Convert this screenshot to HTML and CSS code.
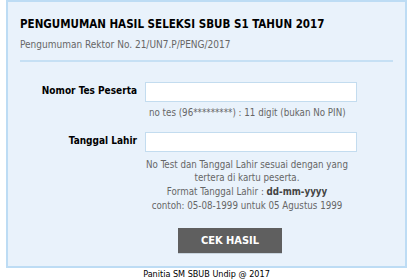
FILE: index.html
```html
<!DOCTYPE html>
<html lang="id">
<head>
    <meta charset="UTF-8">
    <title>Pengumuman Hasil Seleksi SBUB S1</title>
    <link rel="stylesheet" href="styles.css">
</head>
<body>
    <div class="panel">
        <!-- Header -->
        <div class="panel-header">
            <h1>PENGUMUMAN HASIL SELEKSI SBUB S1 TAHUN 2017</h1>
            <p class="subtitle">Pengumuman Rektor No. 21/UN7.P/PENG/2017</p>
        </div>

        <!-- Form -->
        <form class="form" onsubmit="return false">
            <div class="form-row">
                <label for="notes">Nomor Tes Peserta</label>
                <div class="field">
                    <input type="text" id="notes" class="input">
                    <p class="hint">no tes (96*********) : 11 digit (bukan No PIN)</p>
                </div>
            </div>
            <div class="form-row">
                <label for="tgl">Tanggal Lahir</label>
                <div class="field">
                    <input type="text" id="tgl" class="input">
                    <p class="hint hint-center">No Test dan Tanggal Lahir sesuai dengan yang<br>
                        tertera di kartu peserta.<br>
                        Format Tanggal Lahir : <b>dd-mm-yyyy</b><br>
                        contoh: 05-08-1999 untuk 05 Agustus 1999</p>
                </div>
            </div>
            <div class="form-row last">
                <span class="label-space"></span>
                <div class="field">
                    <button type="submit" class="btn-cek">CEK HASIL</button>
                </div>
            </div>
        </form>
    </div>

    <div class="footer">Panitia SM SBUB Undip @ 2017</div>
</body>
</html>
```

FILE: styles.css
```css
/* Global */
body {
    margin: 0;
    font-family: 'DejaVu Sans Condensed', 'DejaVu Sans', sans-serif;
    background: #fff;
    color: #000;
}

/* Panel */
.panel {
    width: 401px;
    box-sizing: border-box;
    margin-left: 6px;
    border: 2px solid #bddcf4;
    background: #e9f2fb;
    padding: 0 12px 12px;
}

.panel-header {
    padding-top: 13px;
    border-bottom: 2px solid #c6e0f4;
    padding-bottom: 8px;
}

.panel-header h1 {
    margin: 0;
    font-size: 11.5px;
    line-height: 18px;
    font-weight: bold;
}

.subtitle {
    margin: 5px 0 0;
    font-size: 10px;
    line-height: 14px;
    color: #666;
}

/* Form */
.form {
    padding-top: 20px;
}

.form-row {
    display: flex;
    gap: 8px;
    margin-bottom: 12px;
}

.form-row.last {
    margin-bottom: 0;
}

.form-row label,
.label-space {
    width: 117px;
    flex-shrink: 0;
    text-align: right;
    font-size: 10px;
    font-weight: bold;
    line-height: 16px;
    padding-top: 1px;
}

.field {
    width: 212px;
    flex-shrink: 0;
}

.input {
    display: block;
    width: 212px;
    height: 20px;
    box-sizing: border-box;
    margin: 0;
    border: 1px solid #c3dcef;
    background: #fff;
}

.hint {
    margin: 4px 0 0;
    padding-left: 4px;
    font-size: 9.7px;
    line-height: 13.7px;
    color: #666;
    white-space: nowrap;
}

.hint-center {
    width: 204px;
    padding-left: 0;
    text-align: center;
    margin-top: 6px;
}

.hint b {
    color: #444;
}

.btn-cek {
    display: block;
    margin: 3px 0 0 33px;
    width: 104px;
    height: 26px;
    border: none;
    border-bottom: 1px solid #c8d4de;
    background: #5f5f5f;
    color: #fff;
    font-family: inherit;
    font-size: 11px;
    font-weight: bold;
    cursor: pointer;
}

/* Footer */
.footer {
    text-align: center;
    width: 413px;
    font-size: 9px;
    line-height: 12px;
}
```
